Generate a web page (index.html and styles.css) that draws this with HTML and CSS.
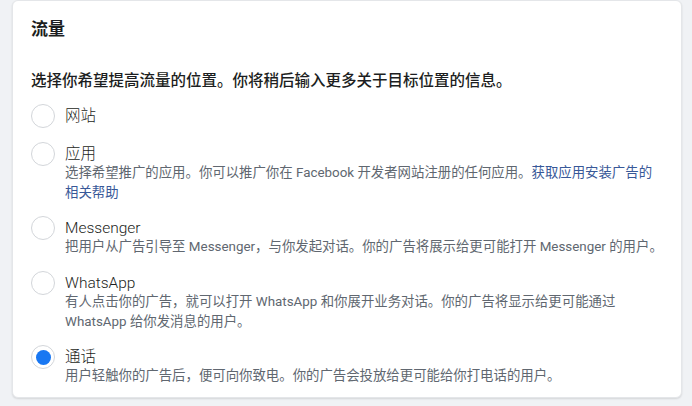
FILE: index.html
```html
<!DOCTYPE html>
<html lang="zh-CN">
<head>
<meta charset="utf-8">
<title>流量</title>
<link rel="stylesheet" href="styles.css">
</head>
<body>
<div class="page">
  <section class="card">
    <h2 class="title">流量</h2>
    <p class="subtitle">选择你希望提高流量的位置。你将稍后输入更多关于目标位置的信息。</p>
    <div class="options">
      <label class="option">
        <span class="radio"></span>
        <span class="text"><span class="label">网站</span></span>
      </label>
      <label class="option">
        <span class="radio"></span>
        <span class="text">
          <span class="label">应用</span>
          <span class="desc">选择希望推广的应用。你可以推广你在 Facebook 开发者网站注册的任何应用。<a class="link" href="#">获取应用安装广告的<br>相关帮助</a></span>
        </span>
      </label>
      <label class="option">
        <span class="radio"></span>
        <span class="text">
          <span class="label">Messenger</span>
          <span class="desc">把用户从广告引导至 Messenger，与你发起对话。你的广告将展示给更可能打开 Messenger 的用户。</span>
        </span>
      </label>
      <label class="option">
        <span class="radio"></span>
        <span class="text">
          <span class="label">WhatsApp</span>
          <span class="desc">有人点击你的广告，就可以打开 WhatsApp 和你展开业务对话。你的广告将显示给更可能通过 WhatsApp 给你发消息的用户。</span>
        </span>
      </label>
      <label class="option">
        <span class="radio checked"></span>
        <span class="text">
          <span class="label">通话</span>
          <span class="desc">用户轻触你的广告后，便可向你致电。你的广告会投放给更可能给你打电话的用户。</span>
        </span>
      </label>
    </div>
  </section>
</div>
</body>
</html>
```
FILE: styles.css
```css
html, body {
  margin: 0;
  padding: 0;
  background: #f0f2f5;
}
body {
  font-family: Roboto, "Noto Sans CJK SC", sans-serif;
  color: #1c1e21;
  width: 692px;
  height: 406px;
  overflow: hidden;
}
.page {
  padding: 0 10px 0 12px;
}
.card {
  box-sizing: border-box;
  background: #fff;
  border-radius: 6px;
  border: 1px solid #e4e6e9;
  box-shadow: 0 1px 2px rgba(0, 0, 0, 0.12);
  padding: 17px 6px 12px 18px;
  height: 398px;
}
.title {
  margin: 0;
  font-size: 17px;
  line-height: 22px;
  font-weight: 700;
}
.subtitle {
  margin: 30px 0 0;
  font-size: 15.5px;
  line-height: 22px;
  font-weight: 500;
}
.options {
  display: flex;
  flex-direction: column;
  gap: 13.5px;
  margin-top: 12px;
}
.option {
  display: flex;
  align-items: flex-start;
  gap: 10px;
  cursor: pointer;
}
.radio {
  flex: none;
  box-sizing: border-box;
  width: 24px;
  height: 24px;
  border-radius: 50%;
  border: 1px solid #d3d6da;
  background: #fff;
  display: flex;
  align-items: center;
  justify-content: center;
}
.radio.checked::after {
  content: "";
  width: 15px;
  height: 15px;
  border-radius: 50%;
  background: #1877f2;
}
.text {
  display: flex;
  flex-direction: column;
  min-width: 0;
}
.label {
  font-size: 15.5px;
  line-height: 20px;
  margin-top: 2px;
  font-weight: 300;
  color: #1c1e21;
}
.desc {
  margin-top: -1px;
  font-size: 13.4px;
  line-height: 20px;
  color: #606770;
}
.link {
  color: #385898;
  text-decoration: none;
}
```
